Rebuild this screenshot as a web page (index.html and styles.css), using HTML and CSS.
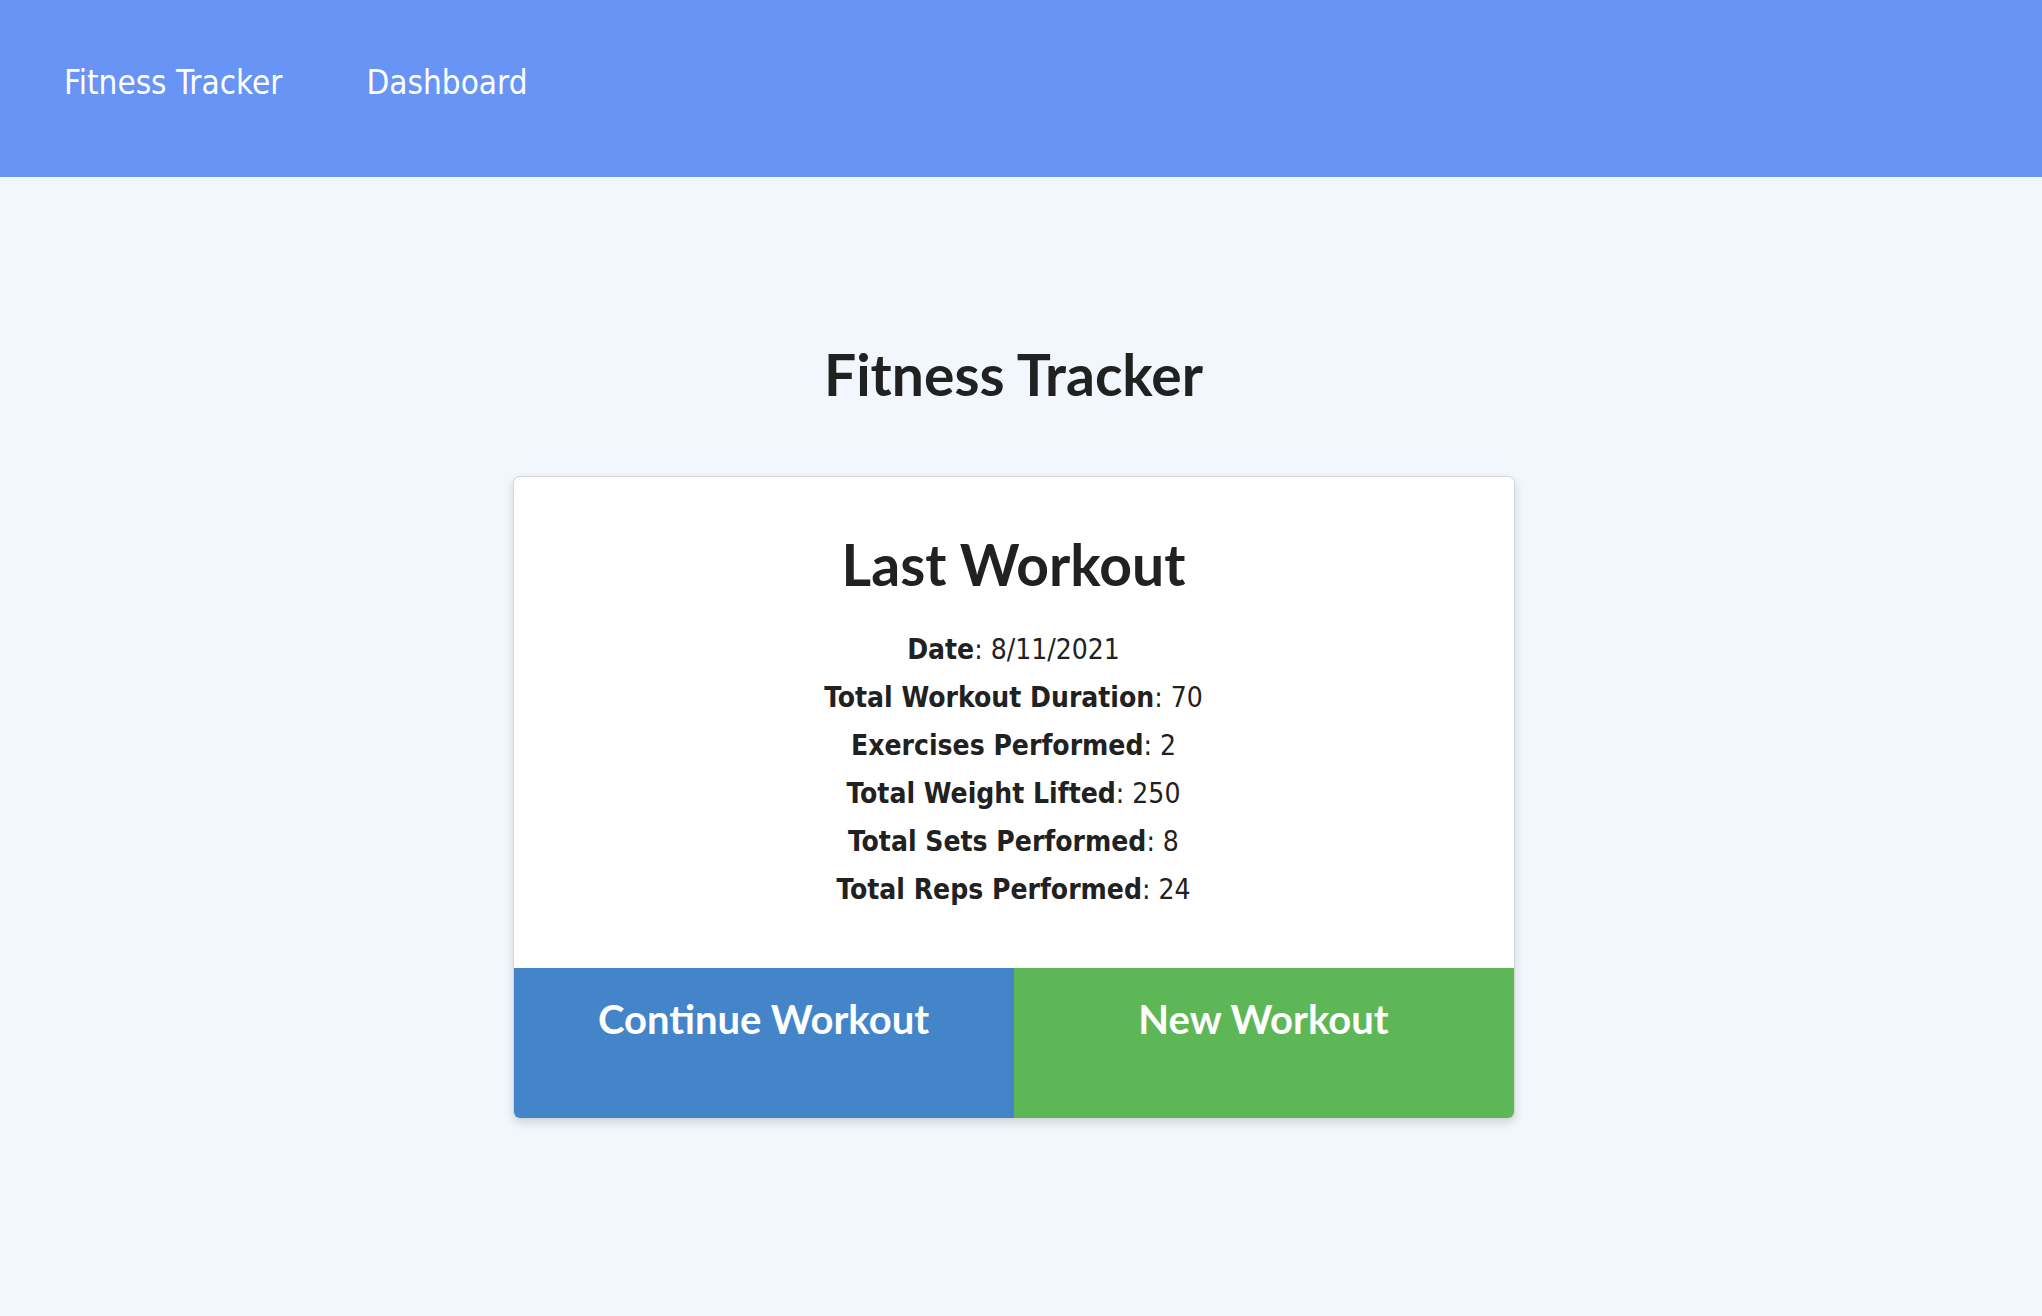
FILE: index.html
```html
<!DOCTYPE html>
<html lang="en">
<head>
<meta charset="utf-8">
<title>Fitness Tracker</title>
<link rel="stylesheet" href="styles.css">
</head>
<body>
<nav class="topnav">
  <a class="nav-link" href="#">Fitness Tracker</a>
  <a class="nav-link" href="#">Dashboard</a>
</nav>
<main class="main">
  <h1 class="title">Fitness Tracker</h1>
  <section class="card">
    <div class="card-body">
      <h2 class="card-title">Last Workout</h2>
      <ul class="stats">
        <li><strong>Date</strong>: 8/11/2021</li>
        <li><strong>Total Workout Duration</strong>: 70</li>
        <li><strong>Exercises Performed</strong>: 2</li>
        <li><strong>Total Weight Lifted</strong>: 250</li>
        <li><strong>Total Sets Performed</strong>: 8</li>
        <li><strong>Total Reps Performed</strong>: 24</li>
      </ul>
    </div>
    <div class="actions">
      <a class="btn btn-continue" href="#">Continue Workout</a>
      <a class="btn btn-new" href="#">New Workout</a>
    </div>
  </section>
</main>
</body>
</html>
```

FILE: styles.css
```css
* { box-sizing: border-box; }

body {
  margin: 0;
  background: #f2f7fe;
  color: #212121;
  font-family: "DejaVu Sans Condensed", "DejaVu Sans", sans-serif;
  font-stretch: condensed;
}

.topnav {
  height: 177px;
  background: #6794f5;
  display: flex;
  align-items: flex-start;
  gap: 84px;
  padding: 63px 0 0 64px;
}

.nav-link {
  color: #ffffff;
  text-decoration: none;
  font-size: 33px;
  line-height: 40px;
}

.main {
  display: flex;
  flex-direction: column;
  align-items: center;
  padding-right: 15px;
  padding-bottom: 100px;
}

.title {
  margin: 164px 0 68px;
  font-family: "Lato", sans-serif;
  font-weight: 700;
  font-size: 57px;
  line-height: 67px;
  color: #212121;
}

.card {
  width: 1002px;
  background: #ffffff;
  border: 1px solid #d4d6d9;
  border-radius: 7px;
  box-shadow: 0 4px 10px rgba(0, 0, 0, 0.14);
  overflow: hidden;
}

.card-body {
  padding-top: 55px;
  padding-bottom: 54px;
  text-align: center;
}

.card-title {
  margin: 0 0 30px;
  font-family: "Lato", sans-serif;
  font-weight: 700;
  font-size: 57px;
  line-height: 64px;
  color: #212121;
}

.stats {
  list-style: none;
  margin: 0;
  padding: 0;
  font-size: 28px;
  line-height: 48px;
}

.stats strong { font-weight: 700; }

.actions {
  display: flex;
}

.btn {
  flex: 1;
  height: 150px;
  padding-top: 27px;
  text-align: center;
  color: #ffffff;
  text-decoration: none;
  font-family: "Lato", sans-serif;
  font-weight: 700;
  font-size: 40px;
  line-height: 48px;
}

.btn-continue { background: #4485ca; }
.btn-new { background: #5db757; }
```
